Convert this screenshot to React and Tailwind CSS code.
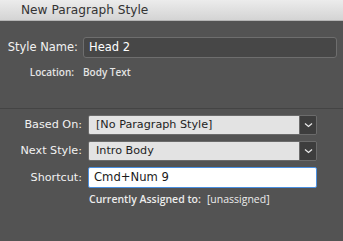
import React from 'react';

const font = { fontFamily: '"DejaVu Sans", "Liberation Sans", sans-serif' };
const small = { fontFamily: '"Open Sans", "DejaVu Sans", sans-serif' };

function Chevron() {
  return (
    <svg width="9" height="6" viewBox="0 0 9 6" fill="none">
      <path d="M1 1.5 L4.5 4.5 L8 1.5" stroke="#e6e6e6" strokeWidth="1.3" />
    </svg>
  );
}

function Select({ value }) {
  return (
    <div className="flex h-[20px] w-[229px] rounded-[2px] border border-[#6b6b6b] overflow-hidden">
      <div className="flex-1 bg-[#e3e3e3] pl-[7px] flex items-center text-[11.2px] text-[#1e1e1e] leading-none">
        {value}
      </div>
      <div className="w-[17px] bg-[#3d3d3d] border-l border-[#6b6b6b] flex items-center justify-center">
        <Chevron />
      </div>
    </div>
  );
}

function Row({ label, children }) {
  return (
    <div className="flex items-center">
      <div className="w-[83px] pr-[1px] text-right text-[11.2px] text-[#f2f2f2] leading-none">{label}</div>
      <div className="ml-[5px]">{children}</div>
    </div>
  );
}

export default function App() {
  return (
    <div className="w-[343px] h-[241px] bg-[#535353] flex flex-col" style={font}>
      <div className="h-[21px] bg-gradient-to-b from-[#ececec] to-[#d4d4d4] border-b border-[#b5b5b5] flex items-center pl-[21px] text-[12.2px] text-[#333]">
        New Paragraph Style
      </div>

      <div className="flex items-center mt-[16px]">
        <div className="w-[78px] text-right text-[11.5px] text-[#f2f2f2] leading-none">Style Name:</div>
        <div className="ml-[5px] h-[21px] w-[254px] rounded-[3px] border border-[#6e6e6e] bg-[#474747] flex items-center pl-[5px] text-[11.5px] text-white">
          Head 2
        </div>
      </div>

      <div className="flex items-center mt-[9px] text-[10px] font-semibold text-[#e4e4e4] leading-none" style={small}>
        <div className="w-[74px] text-right">Location:</div>
        <div className="ml-[9px]">Body Text</div>
      </div>

      <div className="mt-[31px] h-[1px] bg-[#444444]" />

      <div className="mt-[6px] flex flex-col gap-[6px]">
        <Row label="Based On:">
          <Select value="[No Paragraph Style]" />
        </Row>
        <Row label="Next Style:">
          <Select value="Intro Body" />
        </Row>
        <Row label="Shortcut:">
          <div className="h-[21px] w-[229px] rounded-[2px] border border-[#4a8fe0] bg-white flex items-center pl-[5px] text-[11.6px] text-[#1a1a1a]">
            Cmd+Num 9
          </div>
        </Row>
      </div>

      <div className="mt-[6px] pl-[89px] flex items-center text-[10.5px] text-[#ececec] leading-none" style={small}>
        <span className="font-semibold">Currently Assigned to:</span>
        <span className="ml-[6px]">[unassigned]</span>
      </div>
    </div>
  );
}
